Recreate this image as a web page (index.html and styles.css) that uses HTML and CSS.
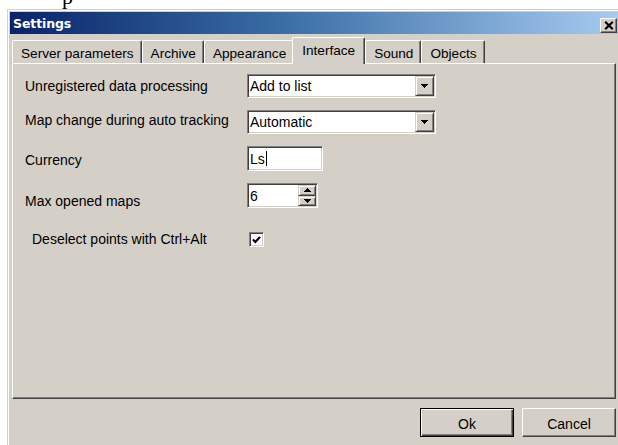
FILE: index.html
```html
<!DOCTYPE html>
<html lang="en">
<head>
<meta charset="utf-8">
<title>Settings</title>
<link rel="stylesheet" href="styles.css">
</head>
<body>
<div class="above"><span class="above-text">p</span></div>
<div class="window">
  <div class="titlebar">
    <span class="title">Settings</span>
    <button class="close" aria-label="Close">
      <svg width="10" height="9" viewBox="0 0 10 9"><path d="M1.2 0.8L8.8 8.2M8.8 0.8L1.2 8.2" stroke="#000" stroke-width="2.2"/></svg>
    </button>
  </div>
  <div class="client">
    <div class="tabs">
      <div class="tab">Server parameters</div>
      <div class="tab">Archive</div>
      <div class="tab">Appearance</div>
      <div class="tab active">Interface</div>
      <div class="tab">Sound</div>
      <div class="tab">Objects</div>
    </div>
    <div class="panel">
      <div class="row">
        <span class="lbl">Unregistered data processing</span>
        <div class="field combo">
          <span class="value">Add to list</span>
          <span class="drop"><svg width="7" height="4" viewBox="0 0 7 4"><path d="M0 0h7v1h-1v1h-1v1h-1v1h-1v-1h-1v-1h-1v-1h-1z" fill="#000"/></svg></span>
        </div>
      </div>
      <div class="row">
        <span class="lbl lbl-up">Map change during auto tracking</span>
        <div class="field combo">
          <span class="value">Automatic</span>
          <span class="drop"><svg width="7" height="4" viewBox="0 0 7 4"><path d="M0 0h7v1h-1v1h-1v1h-1v1h-1v-1h-1v-1h-1v-1h-1z" fill="#000"/></svg></span>
        </div>
      </div>
      <div class="row row-tall">
        <span class="lbl lbl-low">Currency</span>
        <div class="field edit">
          <span class="value">Ls<span class="caret"></span></span>
        </div>
      </div>
      <div class="row row-tall">
        <span class="lbl lbl-lower">Max opened maps</span>
        <div class="field spin">
          <span class="value">6</span>
          <span class="spin-btns">
            <span class="spin-btn"><svg width="7" height="4" viewBox="0 0 7 4"><path d="M3 0h1v1h1v1h1v1h1v1h-7v-1h1v-1h1v-1h1z" fill="#000"/></svg></span>
            <span class="spin-btn"><svg width="7" height="4" viewBox="0 0 7 4"><path d="M0 0h7v1h-1v1h-1v1h-1v1h-1v-1h-1v-1h-1v-1h-1z" fill="#000"/></svg></span>
          </span>
        </div>
      </div>
      <div class="row row-check">
        <span class="lbl lbl-check">Deselect points with Ctrl+Alt</span>
        <span class="check">
          <svg width="9" height="8" viewBox="0 0 9 8"><path d="M1 3.5L3.3 6L8 1" fill="none" stroke="#000" stroke-width="2.2"/></svg>
        </span>
      </div>
    </div>
    <div class="buttons">
      <button class="btn btn-default">Ok</button>
      <button class="btn">Cancel</button>
    </div>
  </div>
</div>
</body>
</html>
```

FILE: styles.css
```css
html, body {
  margin: 0;
  padding: 0;
}

body {
  width: 618px;
  height: 445px;
  overflow: hidden;
  background: #fff;
  font-family: "Liberation Sans", Arial, sans-serif;
  color: #000;
}

/* tail of the line of text above the dialog */
.above {
  height: 9px;
  overflow: hidden;
  padding-left: 62px;
}

.above-text {
  display: block;
  font-family: "Liberation Serif", "Times New Roman", serif;
  font-size: 22px;
  line-height: 22px;
  margin-top: -14px;
}

/* dialog frame */
.window {
  box-sizing: border-box;
  width: 614px;
  height: 436px;
  margin-left: 7px;
  padding: 2px 3px 0 2px;
  background: #d4d0c8;
  border-top: 1px solid #d4d0c8;
  border-left: 1px solid #d4d0c8;
  box-shadow: inset 1px 1px 0 #fff;
  overflow: hidden;
}

.titlebar {
  height: 22px;
  display: flex;
  align-items: center;
  justify-content: space-between;
  padding: 0 1px 0 3px;
  background: linear-gradient(to right, #0a246a 0%, #3a6ea5 45%, #a6caf0 100%);
}

.title {
  color: #fff;
  font-family: "DejaVu Sans", Verdana, sans-serif;
  font-weight: bold;
  font-size: 12.5px;
  letter-spacing: -0.1px;
}

.close {
  box-sizing: border-box;
  width: 17px;
  height: 15px;
  margin: 4px 0 0 0;
  padding: 0;
  display: flex;
  align-items: center;
  justify-content: center;
  background: #d4d0c8;
  border: 1px solid;
  border-color: #fff #404040 #404040 #fff;
  box-shadow: inset -1px -1px 0 #808080;
}

.client {
  padding: 0 2px;
}

/* tab strip */
.tabs {
  height: 29px;
  display: flex;
  align-items: flex-end;
  position: relative;
  z-index: 1;
}

.tab {
  box-sizing: border-box;
  height: 23px;
  padding: 4px 7px 0 8px;
  font-size: 13.6px;
  line-height: 17px;
  white-space: nowrap;
  border-top: 1px solid #fff;
  border-left: 1px solid #fff;
  border-right: 1px solid #404040;
  box-shadow: inset -1px 0 0 #808080;
  border-radius: 2px 2px 0 0;
}

.tab.active {
  height: 27px;
  margin: 0 -1px -1px -2px;
  padding: 4px 9px 0 9px;
  background: #d4d0c8;
}

.tab.active + .tab {
  margin-left: 1px;
}

/* page of the tab control */
.panel {
  box-sizing: border-box;
  height: 336px;
  padding: 10px 0 0 12px;
  border-top: 1px solid #fff;
  border-left: 1px solid #fff;
  border-right: 1px solid #404040;
  border-bottom: 1px solid #404040;
  box-shadow: inset -1px -1px 0 #808080;
  display: flex;
  flex-direction: column;
  gap: 12px;
}

.row {
  display: flex;
  align-items: flex-start;
  height: 24px;
}

.row-tall {
  height: 25px;
}

.row-check {
  height: 15px;
  margin-top: 12px;
}

.lbl {
  width: 222px;
  font-size: 14px;
  line-height: 24px;
  white-space: nowrap;
}

.lbl-up { margin-top: -2px; }
.lbl-low { margin-top: 2px; }
.lbl-lower { margin-top: 6px; }

.lbl-check {
  line-height: 15px;
  padding-left: 7px;
  width: 215px;
}

/* sunken input fields */
.field {
  box-sizing: border-box;
  height: 100%;
  display: flex;
  align-items: stretch;
  background: #fff;
  border: 1px solid;
  border-color: #808080 #fff #fff #808080;
  box-shadow: inset 1px 1px 0 #404040, inset -1px -1px 0 #d4d0c8;
  padding: 1px;
}

.combo { width: 189px; }
.edit { width: 76px; }
.spin { width: 71px; }

.value {
  flex: 1;
  font-size: 14px;
  line-height: 20px;
  padding-left: 1px;
  white-space: nowrap;
  display: flex;
  align-items: center;
}

.caret {
  display: inline-block;
  width: 1px;
  height: 15px;
  margin-left: 1px;
  background: #000;
}

.drop,
.spin-btn {
  box-sizing: border-box;
  display: flex;
  align-items: center;
  justify-content: center;
  background: #d4d0c8;
  border: 1px solid;
  border-color: #d4d0c8 #404040 #404040 #d4d0c8;
  box-shadow: inset 1px 1px 0 #fff, inset -1px -1px 0 #808080;
}

.drop {
  width: 19px;
}

.spin-btns {
  width: 18px;
  display: flex;
  flex-direction: column;
}

.spin-btn {
  flex: 1;
}

.check {
  box-sizing: border-box;
  width: 15px;
  height: 15px;
  margin-left: 2px;
  display: flex;
  align-items: center;
  justify-content: center;
  background: #fff;
  border: 1px solid;
  border-color: #808080 #fff #fff #808080;
  box-shadow: inset 1px 1px 0 #404040, inset -1px -1px 0 #d4d0c8;
}

/* dialog buttons */
.buttons {
  display: flex;
  justify-content: flex-end;
  gap: 8px;
  padding-top: 9px;
}

.btn {
  box-sizing: border-box;
  width: 94px;
  height: 29px;
  padding: 2px 0 0 0;
  font-family: "Liberation Sans", Arial, sans-serif;
  font-size: 14px;
  color: #000;
  background: #d4d0c8;
  border: 1px solid;
  border-color: #fff #404040 #404040 #fff;
  box-shadow: inset -1px -1px 0 #808080;
}

.btn-default {
  border: 1px solid #000;
  box-shadow: inset 1px 1px 0 #fff, inset -1px -1px 0 #404040, inset -2px -2px 0 #808080;
}
```
